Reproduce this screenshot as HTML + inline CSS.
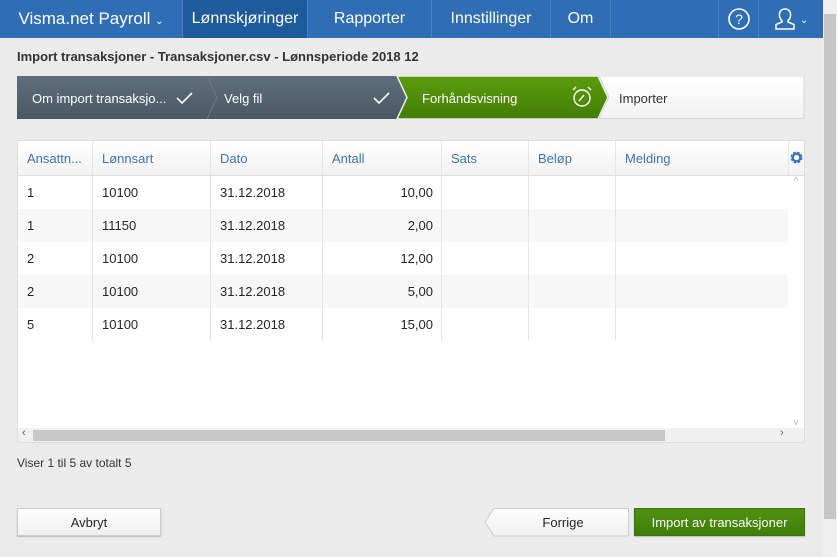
<!DOCTYPE html>
<html><head><meta charset="utf-8"><style>
*{box-sizing:border-box;margin:0;padding:0}
body{width:837px;height:557px;overflow:hidden;background:#ebebeb;font-family:"Liberation Sans",sans-serif;position:relative;color:#252525}
.nav{position:absolute;left:0;top:0;width:823px;height:38px;background:#2f6db5}
.nav div{position:absolute;top:0;height:38px;line-height:38px;color:#fff;font-size:16px;text-align:center;border-right:1px solid #4a80c0}
.sb{position:absolute;left:823px;top:0;width:14px;height:557px;background:#efefef}
.sb .t{position:absolute;left:1px;top:14px;width:12px;height:505px;background:#c6c6c6}
.title{position:absolute;left:17px;top:49px;font-size:13px;font-weight:bold;color:#333}
.steps{position:absolute;left:17px;top:76px;width:788px;height:43px}
.tbl{position:absolute;left:17px;top:140px;width:788px;height:303px;background:#fff;border:1px solid #ddd}
.hd{position:absolute;left:0;top:0;width:786px;height:35px;background:linear-gradient(#fff,#f2f2f2);border-bottom:1px solid #ddd}
.c{position:absolute;font-size:13px;height:33px;line-height:33px;padding-left:9px}
.h{color:#3b73b9;line-height:35px;height:35px}
.vl{position:absolute;top:0;width:1px;height:200px;background:#e5e5e5}
.row{position:absolute;left:0;width:770px;height:33px}
.btn{position:absolute;top:508px;height:28px;line-height:27px;font-size:13px;text-align:center;border:1px solid #ccc;background:linear-gradient(#fff,#f0f0f0);box-shadow:0 1px 1px #bbb}
</style></head><body>
<div class="nav">
<div style="left:0;width:183px;font-size:17px">Visma.net Payroll <span style="font-size:10px">&#8964;</span></div>
<div style="left:183px;width:125px;background:#1e5b9d">Lønnskjøringer</div>
<div style="left:308px;width:124px">Rapporter</div>
<div style="left:432px;width:119px">Innstillinger</div>
<div style="left:551px;width:60px">Om</div>
<div style="left:611px;width:108px;border-right:1px solid #4a80c0"></div>
<div style="left:719px;width:40px"><svg width="24" height="24" viewBox="0 0 24 24" style="vertical-align:middle"><circle cx="12" cy="12" r="10" fill="none" stroke="#fff" stroke-width="1.6"/><text x="12" y="17" font-size="14" fill="#fff" text-anchor="middle" font-family="Liberation Sans">?</text></svg></div>
<div style="left:759px;width:64px;border:none"><svg width="22" height="24" viewBox="0 0 22 24" style="vertical-align:middle"><path d="M11 2c-4 0-6 3-5.5 7 .3 2 1.2 3.5 2.5 4.5v1.5L2 17.5V22h18v-4.5l-6-2.5v-1.5c1.3-1 2.2-2.5 2.5-4.5C17 5 15 2 11 2z" fill="none" stroke="#fff" stroke-width="1.5"/></svg> <span style="font-size:10px">&#8964;</span></div>
</div>
<div class="sb"><div class="t"></div></div>
<div class="title">Import transaksjoner - Transaksjoner.csv - Lønnsperiode 2018 12</div>
<svg class="steps" viewBox="0 0 788 43">
<defs><linearGradient id="g1" x1="0" y1="0" x2="0" y2="1"><stop offset="0" stop-color="#5f6e7c"/><stop offset="1" stop-color="#4a5865"/></linearGradient>
<linearGradient id="g2" x1="0" y1="0" x2="0" y2="1"><stop offset="0" stop-color="#5c9c0e"/><stop offset="1" stop-color="#437d06"/></linearGradient>
<linearGradient id="g3" x1="0" y1="0" x2="0" y2="1"><stop offset="0" stop-color="#fff"/><stop offset="1" stop-color="#f2f2f2"/></linearGradient></defs>
<rect x="0" y="0" width="400" height="43" fill="url(#g1)"/>
<path d="M190 0l10 21.5L190 43" fill="none" stroke="#6b7986" stroke-width="1"/>
<path d="M380 0h201l10 21.5-10 21.5H380l10-21.5z" fill="url(#g2)" stroke="#eee" stroke-width="1.5"/>
<path d="M582 0H787V42.5H582l10-21.5z" fill="url(#g3)" stroke="#d6d6d6"/>
<text x="15" y="27" fill="#fff" font-size="13" font-family="Liberation Sans">Om import transaksjo...</text>
<path d="M160 22l5 5 10-10" fill="none" stroke="#fff" stroke-width="1.6"/>
<text x="207" y="27" fill="#fff" font-size="13" font-family="Liberation Sans">Velg fil</text>
<path d="M357 22l5 5 10-10" fill="none" stroke="#fff" stroke-width="1.6"/>
<text x="405" y="27" fill="#fff" font-size="13" font-family="Liberation Sans">Forhåndsvisning</text>
<circle cx="565" cy="22" r="8" fill="none" stroke="#fff" stroke-width="1.4"/>
<path d="M562 25l5-6M556 14l3-3M574 14l-3-3" stroke="#fff" stroke-width="1.4"/>
<text x="602" y="27" fill="#333" font-size="13" font-family="Liberation Sans">Importer</text>
</svg>
<div class="tbl">
<div class="hd"></div>
<div class="row" style="top:68px;background:#f7f7f7"></div>
<div class="row" style="top:134px;background:#f7f7f7"></div>
<div class="vl" style="left:74px"></div><div class="vl" style="left:192px"></div><div class="vl" style="left:304px"></div><div class="vl" style="left:423px"></div><div class="vl" style="left:510px"></div><div class="vl" style="left:597px"></div><div class="vl" style="left:770px;height:35px"></div>
<div class="c h" style="left:0">Ansattn...</div><div class="c h" style="left:75px">Lønnsart</div><div class="c h" style="left:193px">Dato</div><div class="c h" style="left:305px">Antall</div><div class="c h" style="left:424px">Sats</div><div class="c h" style="left:511px">Beløp</div><div class="c h" style="left:598px">Melding</div>
<svg style="position:absolute;left:772px;top:10px" width="13" height="13" viewBox="0 0 12 12"><circle cx="6" cy="6" r="4" fill="none" stroke="#3b73b9" stroke-width="3" stroke-dasharray="2 1.2"/><circle cx="6" cy="6" r="3.5" fill="none" stroke="#3b73b9" stroke-width="2"/></svg>
<div style="position:absolute;left:770px;top:35px;width:16px;height:252px;background:#fff;color:#bbb;font-size:10px;text-align:center">^<div style="position:absolute;bottom:0;width:16px">v</div></div>
<div style="position:absolute;left:0;top:287px;width:786px;height:14px;background:#f0f0f0;font-size:11px;color:#555"><div style="position:absolute;left:15px;top:2px;width:632px;height:11px;background:#c8c8c8"></div><span style="position:absolute;left:4px;top:-1px">&lsaquo;</span><span style="position:absolute;left:762px;top:-1px">&rsaquo;</span></div>
<div class="c" style="left:0;top:35px">1</div><div class="c" style="left:75px;top:35px">10100</div><div class="c" style="left:193px;top:35px">31.12.2018</div><div class="c" style="left:305px;top:35px;width:110px;text-align:right">10,00</div>
<div class="c" style="left:0;top:68px">1</div><div class="c" style="left:75px;top:68px">11150</div><div class="c" style="left:193px;top:68px">31.12.2018</div><div class="c" style="left:305px;top:68px;width:110px;text-align:right">2,00</div>
<div class="c" style="left:0;top:101px">2</div><div class="c" style="left:75px;top:101px">10100</div><div class="c" style="left:193px;top:101px">31.12.2018</div><div class="c" style="left:305px;top:101px;width:110px;text-align:right">12,00</div>
<div class="c" style="left:0;top:134px">2</div><div class="c" style="left:75px;top:134px">10100</div><div class="c" style="left:193px;top:134px">31.12.2018</div><div class="c" style="left:305px;top:134px;width:110px;text-align:right">5,00</div>
<div class="c" style="left:0;top:167px">5</div><div class="c" style="left:75px;top:167px">10100</div><div class="c" style="left:193px;top:167px">31.12.2018</div><div class="c" style="left:305px;top:167px;width:110px;text-align:right">15,00</div>
</div>
<div style="position:absolute;left:17px;top:456px;font-size:12px;color:#333">Viser 1 til 5 av totalt 5</div>
<div class="btn" style="left:17px;width:144px">Avbryt</div>
<svg style="position:absolute;left:484px;top:508px" width="145" height="29" viewBox="0 0 145 29"><defs><linearGradient id="g4" x1="0" y1="0" x2="0" y2="1"><stop offset="0" stop-color="#fff"/><stop offset="1" stop-color="#f0f0f0"/></linearGradient></defs><path d="M10 .5H144.5V28H10L1 14z" fill="url(#g4)" stroke="#ccc"/><text x="79" y="19" font-size="13" text-anchor="middle" fill="#252525" font-family="Liberation Sans">Forrige</text></svg>
<div class="btn" style="left:634px;width:171px;background:linear-gradient(#4f9212,#3f7d08);border-color:#3a7306;color:#fff">Import av transaksjoner</div>
</body></html>
